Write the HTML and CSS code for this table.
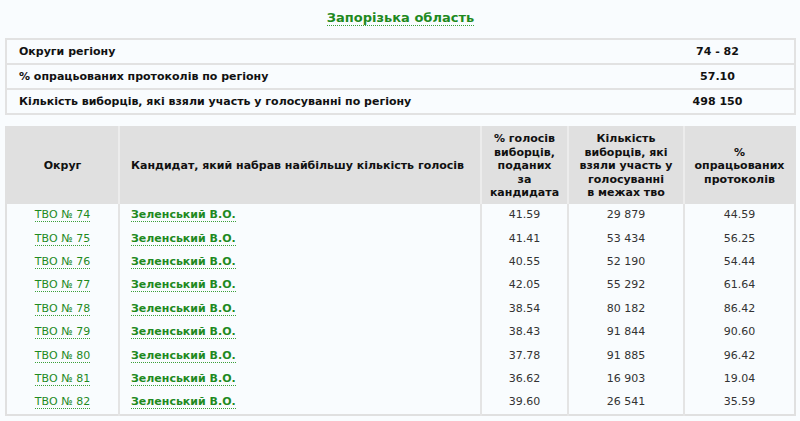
FILE: index.html
```html
<!DOCTYPE html>
<html lang="uk">
<head>
<meta charset="utf-8">
<link rel="stylesheet" href="styles.css">
</head>
<body>
<div class="page">
  <h1 class="title"><a class="dlink">Запорізька область</a></h1>
  <table class="summary">
    <colgroup><col class="s-label"><col class="s-val"></colgroup>
    <tr><td>Округи регіону</td><td class="val">74 - 82</td></tr>
    <tr><td>% опрацьованих протоколів по регіону</td><td class="val">57.10</td></tr>
    <tr><td>Кількість виборців, які взяли участь у голосуванні по регіону</td><td class="val">498 150</td></tr>
  </table>
  <table class="results">
    <colgroup>
      <col class="c1"><col class="c2"><col class="c3"><col class="c4"><col class="c5">
    </colgroup>
    <thead>
      <tr>
        <th>Округ</th>
        <th class="left">Кандидат, який набрав найбільшу кількість голосів</th>
        <th>% голосів<br>виборців,<br>поданих<br>за<br>кандидата</th>
        <th>Кількість<br>виборців, які<br>взяли участь у<br>голосуванні<br>в межах тво</th>
        <th>%<br>опрацьованих<br>протоколів</th>
      </tr>
    </thead>
    <tbody>
      <tr><td class="c"><a class="dlink">ТВО № 74</a></td><td><a class="dlink b">Зеленський В.О.</a></td><td class="c">41.59</td><td class="c">29 879</td><td class="c">44.59</td></tr>
      <tr><td class="c"><a class="dlink">ТВО № 75</a></td><td><a class="dlink b">Зеленський В.О.</a></td><td class="c">41.41</td><td class="c">53 434</td><td class="c">56.25</td></tr>
      <tr><td class="c"><a class="dlink">ТВО № 76</a></td><td><a class="dlink b">Зеленський В.О.</a></td><td class="c">40.55</td><td class="c">52 190</td><td class="c">54.44</td></tr>
      <tr><td class="c"><a class="dlink">ТВО № 77</a></td><td><a class="dlink b">Зеленський В.О.</a></td><td class="c">42.05</td><td class="c">55 292</td><td class="c">61.64</td></tr>
      <tr><td class="c"><a class="dlink">ТВО № 78</a></td><td><a class="dlink b">Зеленський В.О.</a></td><td class="c">38.54</td><td class="c">80 182</td><td class="c">86.42</td></tr>
      <tr><td class="c"><a class="dlink">ТВО № 79</a></td><td><a class="dlink b">Зеленський В.О.</a></td><td class="c">38.43</td><td class="c">91 844</td><td class="c">90.60</td></tr>
      <tr><td class="c"><a class="dlink">ТВО № 80</a></td><td><a class="dlink b">Зеленський В.О.</a></td><td class="c">37.78</td><td class="c">91 885</td><td class="c">96.42</td></tr>
      <tr><td class="c"><a class="dlink">ТВО № 81</a></td><td><a class="dlink b">Зеленський В.О.</a></td><td class="c">36.62</td><td class="c">16 903</td><td class="c">19.04</td></tr>
      <tr><td class="c"><a class="dlink">ТВО № 82</a></td><td><a class="dlink b">Зеленський В.О.</a></td><td class="c">39.60</td><td class="c">26 541</td><td class="c">35.59</td></tr>
    </tbody>
  </table>
</div>
</body>
</html>
```
FILE: styles.css
```css
html, body {
  margin: 0;
  padding: 0;
  background: #f9fcfe;
}
body {
  font-family: "DejaVu Sans", Verdana, sans-serif;
  font-size: 11px;
  color: #222;
}
.page {
  padding: 0 4px 0 5px;
}
.title {
  margin: 0;
  padding: 10px 0 0;
  height: 29px;
  box-sizing: border-box;
  text-align: center;
  font-size: 13px;
  font-weight: bold;
  line-height: 16px;
}
.dlink {
  color: #1f8a1f;
  text-decoration: none;
  border-bottom: 1px dotted #3aa03a;
}
.dlink.b {
  font-weight: bold;
}
table {
  width: 100%;
  border-collapse: collapse;
  table-layout: fixed;
}
.summary {
  border: 2px solid #e2e2e2;
  margin-top: 9px;
}
.s-label { width: 635px; }
.summary td {
  border-top: 2px solid #e2e2e2;
  padding: 0 12px;
  height: 23px;
  font-weight: bold;
  color: #111;
}
.summary td.val {
  text-align: center;
}
.results {
  margin-top: 11px;
  border: 2px solid #e0e0e0;
}
.c1 { width: 113px; }
.c2 { width: 362px; }
.c3 { width: 87px; }
.c4 { width: 116px; }
.results th {
  background: #e0e0e0;
  font-weight: bold;
  color: #111;
  line-height: 13.5px;
  padding: 4px 2px;
  height: 74px;
  box-sizing: border-box;
  border-left: 2px solid #ececec;
  vertical-align: middle;
}
.results th:first-child { border-left: none; }
.results th.left {
  text-align: left;
  padding-left: 11px;
}
.results td {
  height: 23.4px;
  padding: 0 11px;
  border-left: 2px solid #e4e4e4;
  line-height: 14px;
}
.results td:first-child { border-left: none; }
.results td.c {
  text-align: center;
  color: #333;
}
```
